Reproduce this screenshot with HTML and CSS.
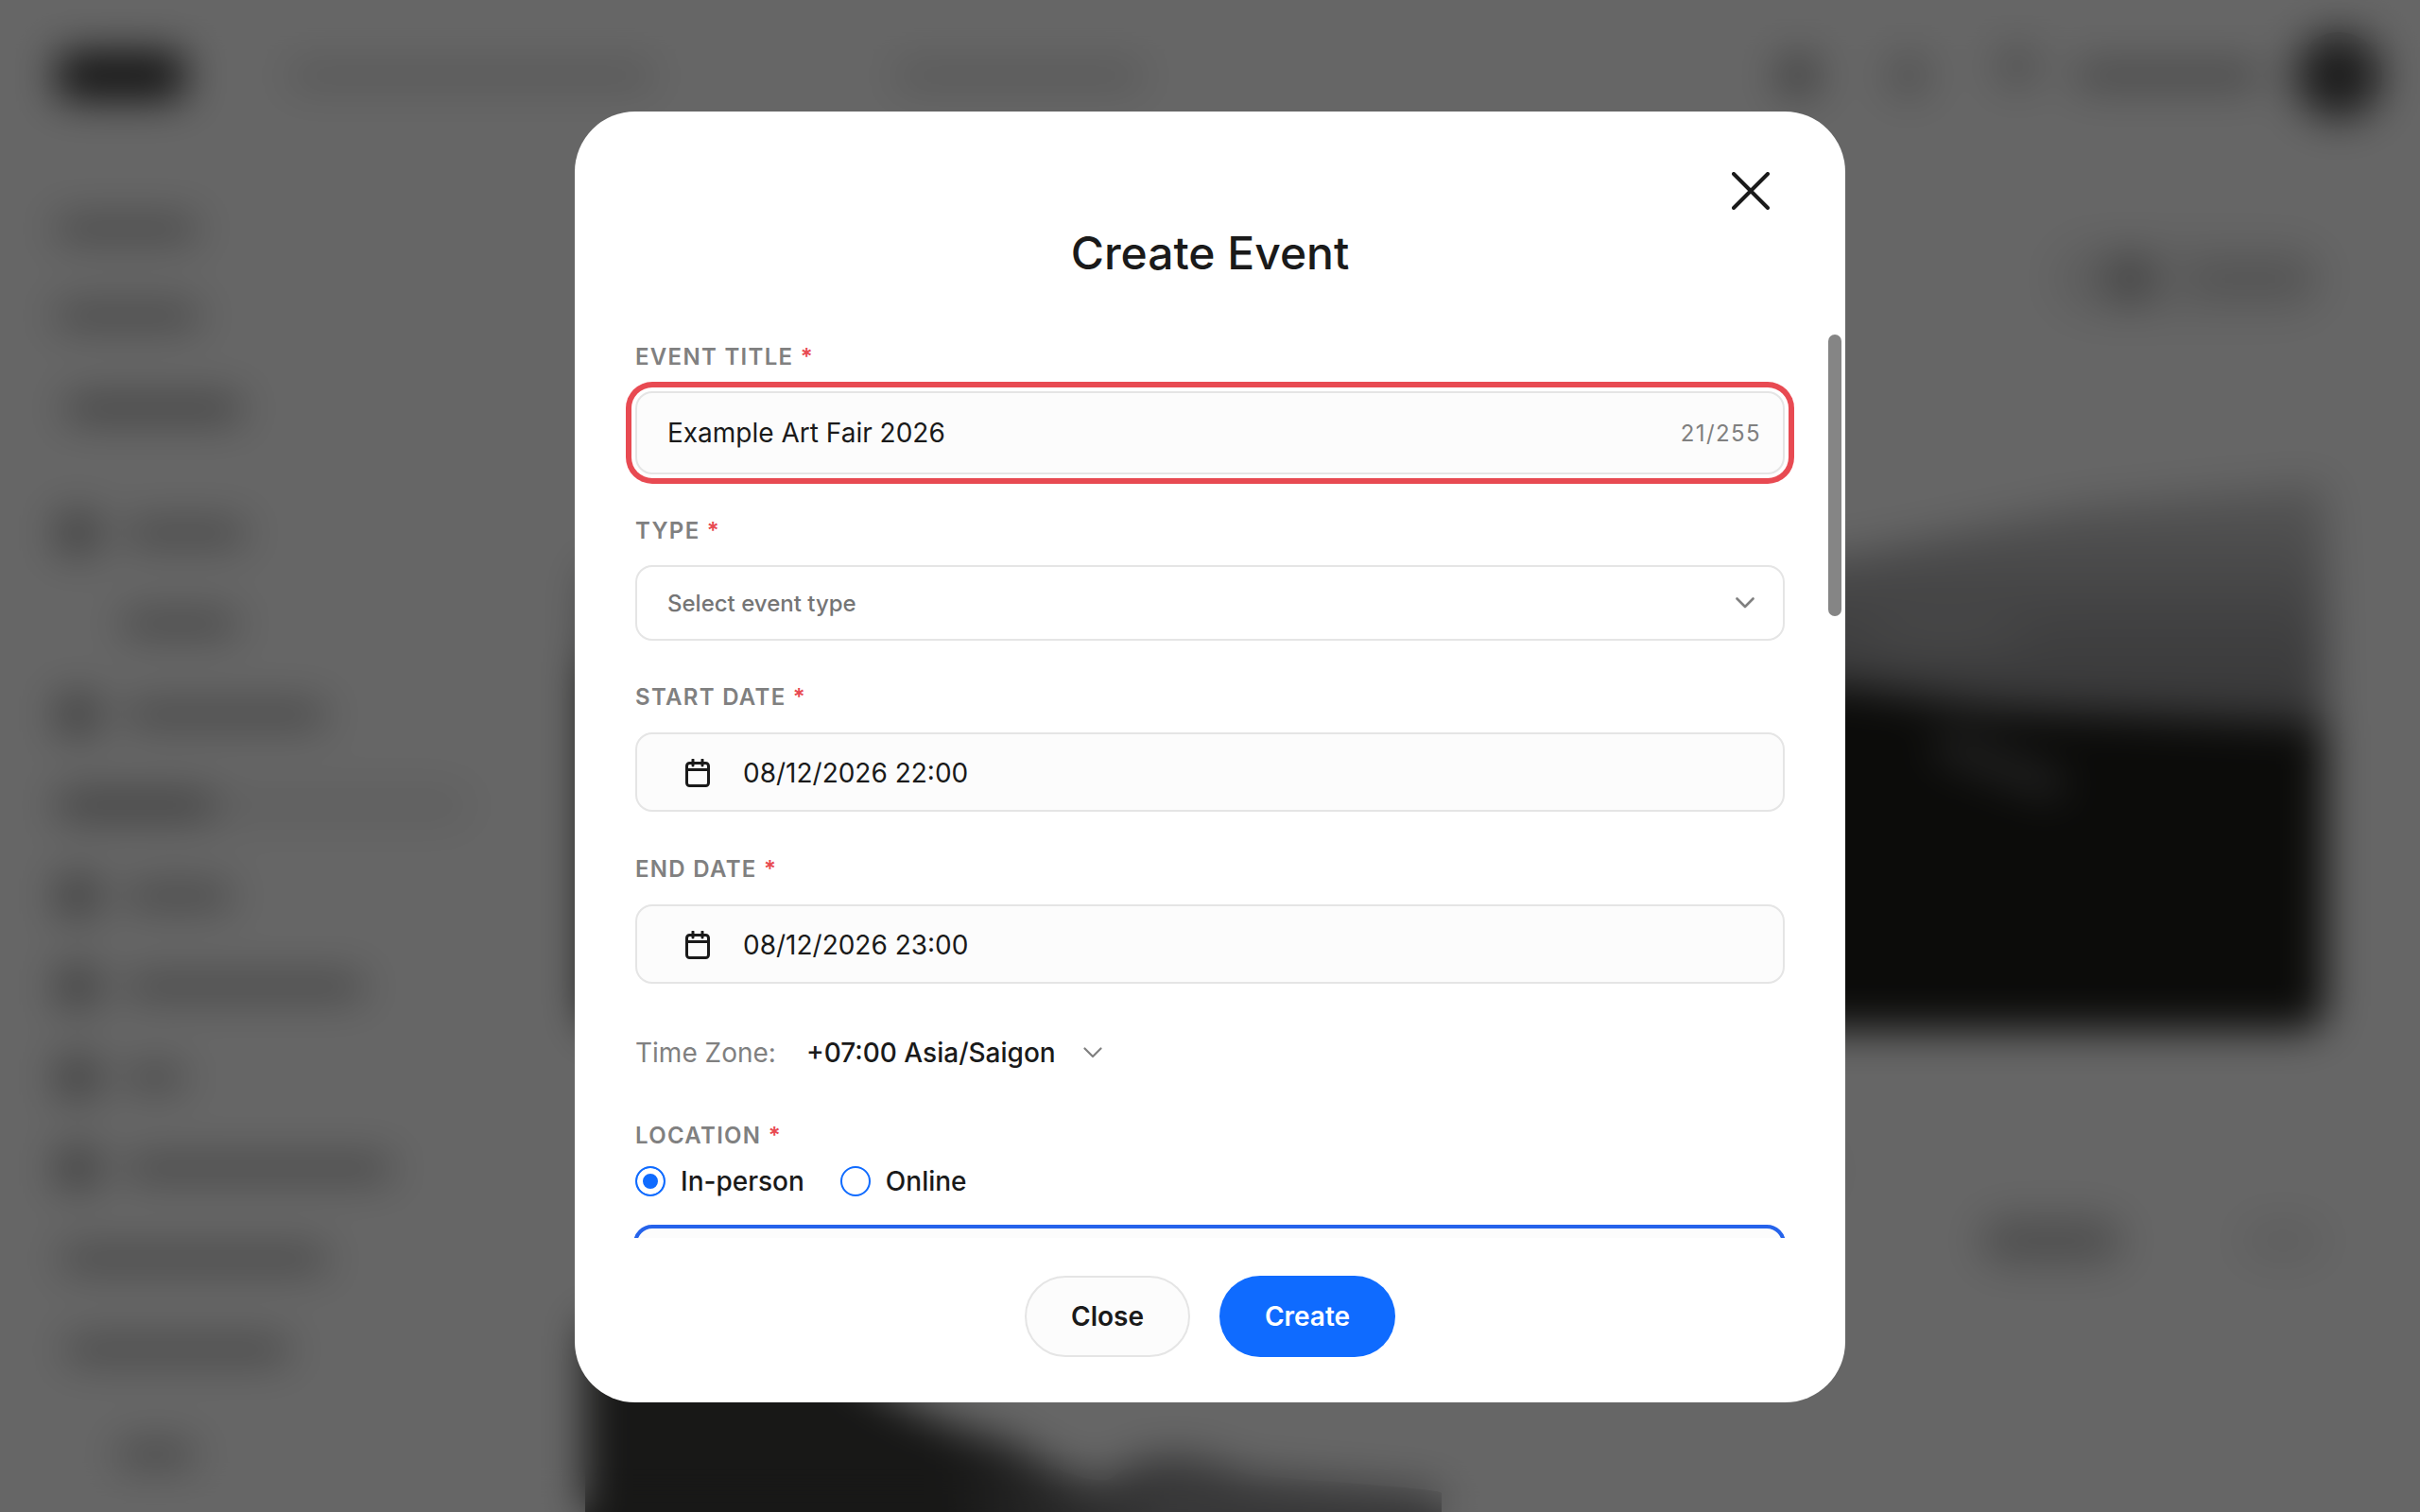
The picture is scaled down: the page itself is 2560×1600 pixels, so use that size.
FILE: index.html
```html
<!DOCTYPE html>
<html lang="en">
<head>
<meta charset="utf-8">
<title>Create Event</title>
<link rel="stylesheet" href="styles.css">
</head>
<body>
<div class="app" aria-hidden="true">
  <header class="topbar">
    <div class="logo"></div>
    <div class="bar bar-search"></div>
    <div class="bar bar-center"></div>
    <div class="top-actions">
      <span class="dot"></span>
      <span class="dot dot-light"></span>
      <span class="dot dot-light dot-raised"></span>
      <span class="bar bar-user"></span>
      <span class="avatar"></span>
    </div>
  </header>
  <div class="shell">
    <nav class="side">
      <div class="item"><i class="txt" style="width:148px"></i></div>
      <div class="item item-tight"><i class="txt" style="width:150px"></i></div>
      <div class="item item-gap1"><i class="txt strong" style="width:185px;margin-left:10px"></i></div>
      <div class="item item-gap2"><i class="ico"></i><i class="txt" style="width:125px"></i></div>
      <div class="item"><i class="txt" style="width:120px;margin-left:70px"></i></div>
      <div class="item"><i class="ico"></i><i class="txt" style="width:210px"></i></div>
      <div class="item item-active"><i class="txt strong" style="width:165px"></i></div>
      <div class="item"><i class="ico"></i><i class="txt" style="width:110px"></i></div>
      <div class="item"><i class="ico"></i><i class="txt" style="width:250px"></i></div>
      <div class="item"><i class="ico"></i><i class="txt" style="width:60px"></i></div>
      <div class="item"><i class="ico"></i><i class="txt" style="width:280px"></i></div>
      <div class="item"><i class="txt" style="width:280px;margin-left:5px"></i></div>
      <div class="item"><i class="txt" style="width:235px;margin-left:10px"></i></div>
      <div class="item item-last"><i class="txt" style="width:80px;margin-left:65px"></i></div>
    </nav>
    <main class="content">
      <div class="toolbar"><div class="action"><span class="action-dot"></span><span class="action-bar"></span></div></div>
      <div class="hero">
        <svg viewBox="0 0 1841 620" preserveAspectRatio="none">
          <defs>
            <linearGradient id="sky" x1="0" y1="0" x2="0" y2="1">
              <stop offset="0" stop-color="#d8d8d8"/>
              <stop offset=".25" stop-color="#a4a4a6"/>
              <stop offset=".42" stop-color="#8c8c8e"/>
            </linearGradient>
          </defs>
          <path fill="url(#sky)" d="M0 130 L1331 117 L1581 65 L1841 40 V620 H0 Z"/>
          <ellipse cx="1441" cy="203" rx="90" ry="16" fill="#b4b4b4"/>
          <path fill="#1e1e1a" d="M0 230 L1331 256 L1486 280 L1841 297 V620 H0 Z"/>
          <path fill="none" stroke="#5a5a5a" stroke-width="30" stroke-linecap="round" d="M1441 320 L1551 360"/>
        </svg>
      </div>
      <div class="pills"><span class="pill pill-dot"></span><span class="pill"></span><span class="pill pill-faint"></span></div>
      <div class="photo">
        <svg viewBox="0 0 906 220" preserveAspectRatio="none">
          <defs>
            <linearGradient id="hill" x1="0" y1="0" x2="1" y2="0">
              <stop offset="0" stop-color="#3c3c3a"/>
              <stop offset=".42" stop-color="#3c3c3a"/>
              <stop offset=".68" stop-color="#8c8c8e"/>
              <stop offset="1" stop-color="#8c8c8e"/>
            </linearGradient>
          </defs>
          <path fill="url(#hill)" d="M0 0 H230 C300 80 380 110 450 125 C500 160 540 170 555 165 C600 130 640 135 700 160 C800 170 906 175 906 180 V220 H0 Z"/>
        </svg>
      </div>
    </main>
  </div>
</div>

<div class="overlay">
  <section class="modal" role="dialog" aria-labelledby="modal-title">
    <button class="close" type="button" aria-label="Close">
      <svg viewBox="0 0 40 40"><path d="M2 2 L38 38 M38 2 L2 38"/></svg>
    </button>
    <header class="modal-head">
      <h1 id="modal-title">Create Event</h1>
    </header>
    <div class="modal-body">
      <div class="group group-title">
        <div class="label">EVENT TITLE <b>*</b></div>
        <div class="field field-error">
          <span class="value">Example Art Fair 2026</span>
          <span class="count">21/255</span>
        </div>
      </div>
      <div class="group group-type">
        <div class="label">TYPE <b>*</b></div>
        <div class="field field-select">
          <span class="placeholder">Select event type</span>
          <svg class="chev" viewBox="0 0 20 12"><path d="M1.5 1.5 L10 10 L18.5 1.5"/></svg>
        </div>
      </div>
      <div class="group group-start">
        <div class="label label-loose">START DATE <b>*</b></div>
        <div class="field field-date">
          <svg class="cal" viewBox="0 0 26 30"><rect x="1.5" y="4.5" width="23" height="24" rx="3"/><path d="M1.5 11.5 H24.5 M8 1 V7 M18 1 V7"/></svg>
          <span class="value">08/12/2026 22:00</span>
        </div>
      </div>
      <div class="group group-end">
        <div class="label label-loose">END DATE <b>*</b></div>
        <div class="field field-date">
          <svg class="cal" viewBox="0 0 26 30"><rect x="1.5" y="4.5" width="23" height="24" rx="3"/><path d="M1.5 11.5 H24.5 M8 1 V7 M18 1 V7"/></svg>
          <span class="value">08/12/2026 23:00</span>
        </div>
      </div>
      <div class="tz">
        <span class="tz-label">Time Zone:</span>
        <span class="tz-value">+07:00 Asia/Saigon</span>
        <svg class="chev chev-thin" viewBox="0 0 20 12"><path d="M1.5 1.5 L10 10 L18.5 1.5"/></svg>
      </div>
      <div class="group group-location">
        <div class="label">LOCATION <b>*</b></div>
        <div class="radios">
          <span class="radio"><span class="ring ring-on"></span>In-person</span>
          <span class="radio"><span class="ring"></span>Online</span>
        </div>
        <div class="venue"></div>
      </div>
    </div>
    <div class="thumb"></div>
    <footer class="modal-foot">
      <button class="btn btn-ghost" type="button">Close</button>
      <button class="btn btn-primary" type="button">Create</button>
    </footer>
  </section>
</div>
</body>
</html>
```
FILE: styles.css
```css
* { box-sizing: border-box; }
html, body { margin: 0; height: 100%; }
body { width: 2560px; height: 1600px; overflow: hidden; background: #fff; font-family: Inter, "Liberation Sans", sans-serif; color: #1a1a1a; }

/* page behind the dialog */
.app { width: 2560px; height: 1600px; overflow: hidden; display: flex; flex-direction: column; }
.topbar { height: 160px; flex: none; display: flex; align-items: center; padding-left: 60px; }
.logo { width: 136px; height: 50px; border-radius: 14px; background: #2e2e2e; }
.bar { display: block; height: 24px; border-radius: 6px; background: #bbb; }
.bar-search { width: 385px; margin-left: 110px; background: #d4d4d4; }
.bar-center { width: 260px; margin-left: 257px; background: #d4d4d4; }
.top-actions { margin-left: auto; display: flex; align-items: center; padding-right: 40px; }
.dot { width: 44px; height: 44px; border-radius: 50%; background: #999; margin-right: 73px; }
.dot-light { background: #c4c4c4; margin-right: 71px; }
.dot-raised { position: relative; top: -10px; margin-right: 40px; }
.bar-user { width: 195px; margin-right: 37px; background: #aaa; }
.avatar { width: 92px; height: 92px; border-radius: 50%; background: #4a4a4a; }

.shell { flex: 1; display: flex; min-height: 0; }
.side { width: 619px; flex: none; padding: 59px 0 0 60px; display: flex; flex-direction: column; gap: 50px; }
.item { height: 46px; display: flex; align-items: center; flex: none; }
.item-tight { margin-top: -4px; }
.item-gap1 { margin-top: 2px; }
.item-gap2 { margin-top: 36px; }
.item-last { margin-top: 15px; }
.item .ico { width: 44px; height: 44px; border-radius: 10px; background: #a0a0a0; margin-right: 30px; flex: none; }
.item .txt { height: 24px; border-radius: 6px; background: #aaa; display: block; }
.item .strong { background: #999; }
.item-active { width: 440px; background: #f0f0f0; border-radius: 23px; }

.content { flex: 1; min-width: 0; display: flex; flex-direction: column; }
.toolbar { height: 310px; flex: none; display: flex; justify-content: flex-end; padding-right: 100px; }
.action { margin-top: 95px; width: 290px; height: 80px; border-radius: 40px; background: #ececec; display: flex; align-items: center; padding-left: 58px; gap: 40px; }
.action-dot { width: 50px; height: 50px; border-radius: 50%; background: #a8a8a8; }
.action-bar { width: 125px; height: 26px; border-radius: 6px; background: #c8c8c8; }
.hero { width: 1841px; height: 620px; flex: none; background: #fff; border-radius: 24px; overflow: hidden; }
.hero svg, .photo svg { display: block; width: 100%; height: 100%; }
.pills { width: 1841px; height: 310px; flex: none; display: flex; justify-content: flex-end; align-items: flex-start; padding-top: 199px; gap: 125px; }
.pill { width: 150px; height: 48px; border-radius: 24px; background: #c4c4c4; }
.pill-dot { width: 50px; margin-top: -74px; margin-right: 40px; background: #ccc; }
.pill-faint { width: 90px; background: #ededed; }
.photo { width: 906px; height: 220px; flex: none; }

/* dialog */
.overlay { position: fixed; inset: 0; padding-top: 2px; display: flex; align-items: center; justify-content: center; background: rgba(0, 0, 0, .6); -webkit-backdrop-filter: blur(22px); backdrop-filter: blur(22px); }
.modal { position: relative; width: 1344px; height: 1366px; background: #fff; border-radius: 64px; display: flex; flex-direction: column; }
.close { position: absolute; top: 64px; right: 80px; width: 40px; height: 40px; padding: 0; border: 0; background: none; }
.close svg { display: block; width: 40px; height: 40px; fill: none; stroke: #1a1a1a; stroke-width: 4; stroke-linecap: round; }
.modal-head { height: 226px; flex: none; padding-top: 121px; text-align: center; }
.modal-head h1 { margin: 0; font-size: 48px; line-height: 58px; font-weight: 500; color: #1a1a1a; }
.modal-body { height: 966px; flex: none; overflow: hidden; padding: 18px 64px 0; }
.group-title { margin-bottom: 44px; }
.group-type { margin-bottom: 44px; }
.group-start { margin-bottom: 45px; }
.group-end { margin-bottom: 53px; }
.label { height: 32px; margin-bottom: 20px; font-size: 24px; line-height: 32px; font-weight: 600; letter-spacing: 1.3px; color: #808080; }
.label-loose { margin-bottom: 21px; }
.label b { color: #e84a52; font-weight: 600; }
.field { width: 1216px; display: flex; align-items: center; border: 2px solid #e5e5e5; border-radius: 18px; background: #fcfcfc; }
.field-error { height: 88px; padding: 0 23px 0 32px; justify-content: space-between; box-shadow: 0 0 0 4px #fff, 0 0 0 10px #e84a52; }
.field-select { height: 80px; padding: 0 30px 0 32px; justify-content: space-between; background: #fff; }
.field-date { height: 84px; padding: 2px 0 0 51px; gap: 35px; }
.value { font-size: 28px; line-height: 36px; }
.count { font-size: 24px; letter-spacing: 1.4px; color: #808080; }
.placeholder { font-size: 24px; font-weight: 500; color: #757575; }
.chev { width: 20px; height: 12px; fill: none; stroke: #808080; stroke-width: 2.6; stroke-linecap: round; stroke-linejoin: round; }
.chev-thin { stroke-width: 2.2; }
.cal { width: 26px; height: 30px; fill: none; stroke: #1a1a1a; stroke-width: 3; stroke-linecap: round; }
.tz { height: 40px; margin-bottom: 52px; display: flex; align-items: center; font-size: 28px; }
.tz-label { color: #808080; width: 181px; }
.tz-value { font-weight: 500; margin-right: 29px; }
.group-location .label { margin-bottom: 16px; }
.radios { display: flex; gap: 38px; height: 32px; margin-bottom: 30px; }
.radio { display: flex; align-items: center; gap: 16px; font-size: 28px; font-weight: 500; }
.ring { width: 32px; height: 32px; border-radius: 50%; border: 2px solid #0f6bff; background: #fff; flex: none; }
.ring-on { background: #0f6bff; box-shadow: inset 0 0 0 6px #fff; }
.venue { width: 1219px; margin-left: -2px; height: 200px; border: 4px solid #2563eb; border-radius: 20px; background: #fcfcfc; }
.thumb { position: absolute; top: 236px; right: 4px; width: 14px; height: 298px; border-radius: 7px; background: #858585; }
.modal-foot { flex: 1; display: flex; justify-content: center; gap: 31px; padding-top: 40px; }
.btn { height: 86px; border-radius: 43px; font: 600 28px Inter, "Liberation Sans", sans-serif; padding: 0; }
.btn-ghost { width: 175px; background: #fcfcfc; border: 2px solid #e5e5e5; color: #1a1a1a; }
.btn-primary { width: 186px; background: #0f6bff; border: 0; color: #fff; }
```
